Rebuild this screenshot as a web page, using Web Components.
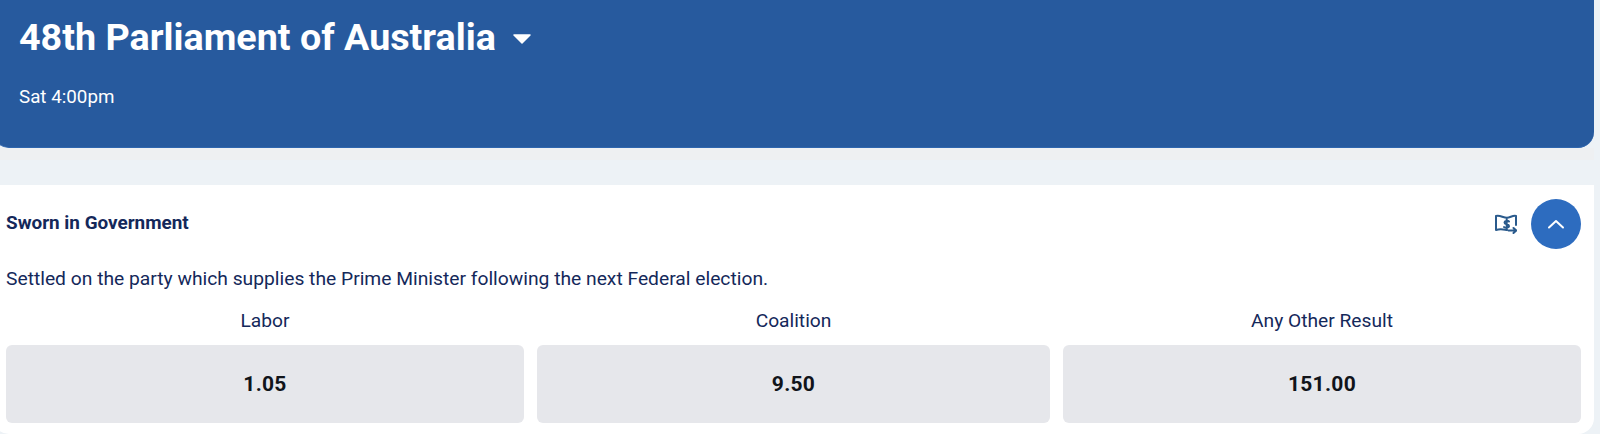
<!DOCTYPE html>
<html lang="en"><head><meta charset="utf-8"><title>48th Parliament of Australia</title>
<style>
html,body{margin:0;padding:0;height:434px;overflow:hidden;background:#edf2f6;font-family:Roboto,"Liberation Sans",sans-serif}
</style></head><body>
<market-page>
<market-header slot="header" title-text="48th Parliament of Australia" time="Sat 4:00pm"></market-header>
<market-card heading="Sworn in Government" description="Settled on the party which supplies the Prime Minister following the next Federal election.">
<odds-option label="Labor" price="1.05"></odds-option>
<odds-option label="Coalition" price="9.50"></odds-option>
<odds-option label="Any Other Result" price="151.00"></odds-option>
</market-card>
</market-page>
<script>
function def(name,html,attrs){customElements.define(name,class extends HTMLElement{connectedCallback(){if(this.shadowRoot)return;const r=this.attachShadow({mode:'open'});let h=html;(attrs||[]).forEach(a=>{h=h.split('{{'+a+'}}').join(this.getAttribute(a)||'')});r.innerHTML=h}})}
def('market-page',`<style>:host{display:flex;flex-direction:column;margin-left:-7px;width:1601px;height:434px;overflow:hidden}
.gap{height:12px;background:#eef0f2;flex:none}.gap2{height:25px;flex:none}</style><slot name="header"></slot><div class="gap"></div><div class="gap2"></div><slot></slot>`);
def('market-header',`<style>:host{display:block;flex:none;height:148px;box-sizing:border-box;padding:15px 0 0 26px;background:#275a9e;border-bottom:1px solid #2f66ae;border-radius:0 0 16px 16px;color:#fff}
.t{display:flex;align-items:center;gap:17px;height:44px}
h1{margin:0;font:700 37.7px/44px Roboto,sans-serif}
svg{width:18px;height:10px;margin-top:3px;display:block}
p{margin:28px 0 0;font:400 18.8px/20px Roboto,sans-serif}</style>
<div class="t"><h1>{{title-text}}</h1><svg viewBox="0 0 18 10"><path d="M1 1H17L9 9Z" fill="#fff" stroke="#fff" stroke-width="1.500" stroke-linejoin="round"/></svg></div><p>{{time}}</p>`,['title-text','time']);
def('market-card',`<style>:host{display:block;flex:none;height:249px;box-sizing:border-box;padding:0 13px;background:#fff;border-radius:0 0 16px 16px;color:#14285a}
.h{display:flex;align-items:center;height:77px;}
h2{margin:0 0 2px;flex:1;font:700 18.9px/20px Roboto,sans-serif}
.cash{width:22px;height:20px;display:block;margin-right:14px}
button{width:50px;height:50px;border:0;border-radius:50%;background:#2d6cbf;padding:0;display:flex;align-items:center;justify-content:center}
button svg{width:18px;height:10px;display:block}
p{margin:0;font:400 19.25px/24px Roboto,sans-serif;height:24px;padding-top:5px}
.grid{display:grid;grid-template-columns:518px 513px 518px;gap:13px;margin-top:18px}</style>
<div class="h"><h2>{{heading}}</h2>
<svg class="cash" viewBox="0 0 22 20" fill="none" stroke="#2a5a8c" stroke-width="2" stroke-linejoin="round" stroke-linecap="round"><path d="M12 16C8.500 15.500 5.500 14.500 1 16V2C5 .8 8 3.800 12 3.800C15 3.800 18 1 21 2V11"/><path d="M14 7.500C13 6.500 9.500 6.500 9.500 8.500C9.500 10.800 14 9.700 14 12C14 14 10.500 14 9 13M11.700 5V15"/><path d="M13.500 16.500H21M18.500 14L21.300 16.500L18.500 19"/></svg>
<button aria-label="Collapse"><svg viewBox="0 0 18 10" fill="none" stroke="#fff" stroke-width="2" stroke-linecap="round" stroke-linejoin="round"><path d="M2 8.500L9 2L16 8.500"/></svg></button></div>
<p>{{description}}</p><div class="grid"><slot></slot></div>`,['heading','description']);
def('odds-option',`<style>:host{display:block;min-width:0;color:#14285a}
.l{text-align:center;font:400 19.2px/24px Roboto,sans-serif;height:24px}
.b{margin-top:12px;height:78px;border-radius:6px;background:#e6e7eb;display:flex;align-items:center;justify-content:center;font:700 21px/24px Roboto,sans-serif;color:#11141a;letter-spacing:.3px}</style>
<div class="l">{{label}}</div><div class="b">{{price}}</div>`,['label','price']);
</script></body></html>
